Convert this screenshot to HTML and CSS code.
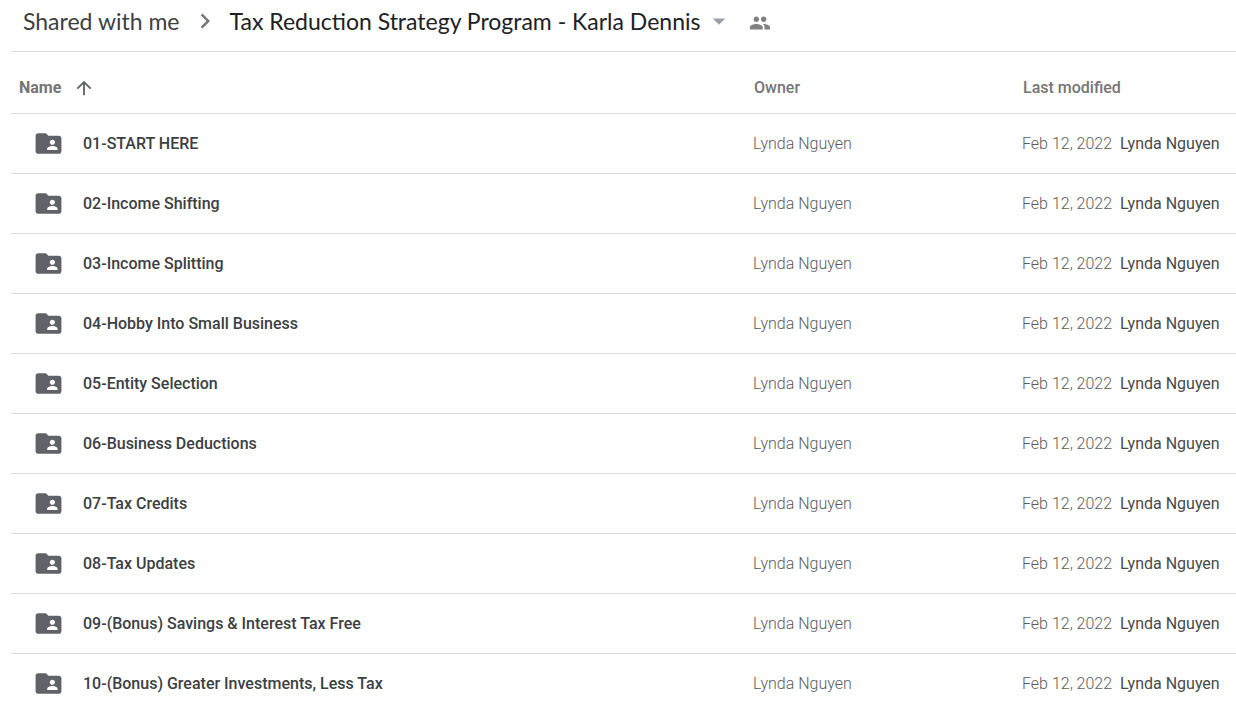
FILE: index.html
```html
<!DOCTYPE html>
<html lang="en">
  <head>
    <meta charset="UTF-8" />
    <meta name="viewport" content="width=device-width, initial-scale=1.0" />
    <title>Tax Reduction Strategy Program - Karla Dennis</title>
    <link rel="stylesheet" href="styles.css">
  </head>
  <body>
    <!-- Icons used more than once -->
    <svg class="sprite" aria-hidden="true">
      <symbol id="folder-shared" viewBox="0 0 24 24">
        <path d="M20 6h-8l-2-2H4c-1.100 0-1.990.9-1.990 2L2 18c0 1.100.9 2 2 2h16c1.100 0 2-.9 2-2V8c0-1.100-.9-2-2-2zm-5 3c1.100 0 2 .9 2 2s-.9 2-2 2-2-.9-2-2 .9-2 2-2zm4 8h-8v-1c0-1.330 2.670-2 4-2s4 .67 4 2v1z" />
      </symbol>
    </svg>

    <header class="breadcrumb">
      <a class="crumb" href="#">Shared with me</a>
      <svg class="chevron" viewBox="0 0 24 24" aria-hidden="true">
        <path d="M10 6L8.590 7.410 13.170 12l-4.580 4.590L10 18l6-6z" />
      </svg>
      <button class="crumb current" type="button">
        Tax Reduction Strategy Program - Karla Dennis
        <svg class="caret" viewBox="0 0 24 24" aria-hidden="true">
          <path d="M7 10l5 5 5-5z" />
        </svg>
      </button>
      <button class="people" type="button" aria-label="Manage people">
        <svg viewBox="0 0 24 24" aria-hidden="true">
          <path d="M16 11c1.660 0 2.990-1.340 2.990-3S17.660 5 16 5s-3 1.340-3 3 1.340 3 3 3zm-8 0c1.660 0 2.990-1.340 2.990-3S9.660 5 8 5 5 6.340 5 8s1.340 3 3 3zm0 2c-2.330 0-7 1.170-7 3.500V19h14v-2.500c0-2.330-4.670-3.500-7-3.500zm8 0c-.29 0-.62.02-.97.050 1.160.84 1.970 1.970 1.970 3.450V19h6v-2.500c0-2.330-4.670-3.500-7-3.500z" />
        </svg>
      </button>
    </header>

    <main>
      <table class="files">
        <thead>
          <tr>
            <th class="col-name" scope="col" aria-sort="ascending">
              <button class="sort" type="button">
                Name
                <svg viewBox="0 0 24 24" aria-hidden="true">
                  <path d="M4 12l1.410 1.410L11 7.830V20h2V7.830l5.580 5.590L20 12l-8-8-8 8z" />
                </svg>
              </button>
            </th>
            <th class="col-owner" scope="col">Owner</th>
            <th class="col-modified" scope="col">Last modified</th>
          </tr>
        </thead>
        <tbody>
          <tr>
            <td><a class="file" href="#"><svg class="folder" aria-hidden="true"><use href="#folder-shared" /></svg>01-START HERE</a></td>
            <td>Lynda Nguyen</td>
            <td>Feb 12, 2022 <span class="by">Lynda Nguyen</span></td>
          </tr>
          <tr>
            <td><a class="file" href="#"><svg class="folder" aria-hidden="true"><use href="#folder-shared" /></svg>02-Income Shifting</a></td>
            <td>Lynda Nguyen</td>
            <td>Feb 12, 2022 <span class="by">Lynda Nguyen</span></td>
          </tr>
          <tr>
            <td><a class="file" href="#"><svg class="folder" aria-hidden="true"><use href="#folder-shared" /></svg>03-Income Splitting</a></td>
            <td>Lynda Nguyen</td>
            <td>Feb 12, 2022 <span class="by">Lynda Nguyen</span></td>
          </tr>
          <tr>
            <td><a class="file" href="#"><svg class="folder" aria-hidden="true"><use href="#folder-shared" /></svg>04-Hobby Into Small Business</a></td>
            <td>Lynda Nguyen</td>
            <td>Feb 12, 2022 <span class="by">Lynda Nguyen</span></td>
          </tr>
          <tr>
            <td><a class="file" href="#"><svg class="folder" aria-hidden="true"><use href="#folder-shared" /></svg>05-Entity Selection</a></td>
            <td>Lynda Nguyen</td>
            <td>Feb 12, 2022 <span class="by">Lynda Nguyen</span></td>
          </tr>
          <tr>
            <td><a class="file" href="#"><svg class="folder" aria-hidden="true"><use href="#folder-shared" /></svg>06-Business Deductions</a></td>
            <td>Lynda Nguyen</td>
            <td>Feb 12, 2022 <span class="by">Lynda Nguyen</span></td>
          </tr>
          <tr>
            <td><a class="file" href="#"><svg class="folder" aria-hidden="true"><use href="#folder-shared" /></svg>07-Tax Credits</a></td>
            <td>Lynda Nguyen</td>
            <td>Feb 12, 2022 <span class="by">Lynda Nguyen</span></td>
          </tr>
          <tr>
            <td><a class="file" href="#"><svg class="folder" aria-hidden="true"><use href="#folder-shared" /></svg>08-Tax Updates</a></td>
            <td>Lynda Nguyen</td>
            <td>Feb 12, 2022 <span class="by">Lynda Nguyen</span></td>
          </tr>
          <tr>
            <td><a class="file" href="#"><svg class="folder" aria-hidden="true"><use href="#folder-shared" /></svg>09-(Bonus) Savings &amp; Interest Tax Free</a></td>
            <td>Lynda Nguyen</td>
            <td>Feb 12, 2022 <span class="by">Lynda Nguyen</span></td>
          </tr>
          <tr>
            <td><a class="file" href="#"><svg class="folder" aria-hidden="true"><use href="#folder-shared" /></svg>10-(Bonus) Greater Investments, Less Tax</a></td>
            <td>Lynda Nguyen</td>
            <td>Feb 12, 2022 <span class="by">Lynda Nguyen</span></td>
          </tr>
        </tbody>
      </table>
    </main>
  </body>
</html>
```

FILE: styles.css
```css
:root {
  --line: #dadce0;
  --text: #3c4043;
  --muted: #757575;
  --icon: #5f6368;
}

* {
  padding: 0;
  margin: 0;
  box-sizing: border-box;
}

body {
  font-family: Roboto, sans-serif;
  font-size: 16px;
  line-height: 20px;
  color: var(--text);
  background: #fff;
  padding-left: 11px;
}

button {
  font: inherit;
  color: inherit;
  background: none;
  border: 0;
  cursor: pointer;
}

a {
  color: inherit;
  text-decoration: none;
}

svg {
  display: block;
  flex-shrink: 0;
  fill: currentColor;
}

.sprite {
  position: absolute;
  width: 0;
  height: 0;
}

/* Breadcrumb */
.breadcrumb {
  display: flex;
  align-items: center;
  height: 52px;
  padding: 0 0 10px 12px;
  border-bottom: 1px solid var(--line);
}

.crumb {
  font-family: Lato, sans-serif;
  font-size: 23px;
  line-height: 28px;
  white-space: nowrap;
}

.current {
  display: flex;
  align-items: center;
  gap: 4px;
  color: #202124;
}

.chevron,
.caret {
  width: 30px;
  height: 30px;
}

.chevron {
  margin: 0 10px;
  color: #777;
}

.caret {
  color: #9aa0a6;
}

.people {
  margin: 4px 0 0 15px;
  color: #808080;
}

.people svg {
  width: 22px;
  height: 22px;
}

/* File list */
.files {
  width: 100%;
  table-layout: fixed;
  border-collapse: collapse;
}

.files th,
.files td {
  height: 60px;
  text-align: left;
  white-space: nowrap;
  border-bottom: 1px solid var(--line);
}

.files th {
  height: 61px;
  padding: 11px 0 0 2px;
  font-weight: 500;
  color: var(--muted);
}

.files td {
  padding: 1px 0 0 1px;
  font-weight: 300;
  color: #5c5c5c;
}

.files tbody tr:last-child td {
  border-bottom: 0;
}

.col-owner {
  width: 269px;
}

.col-modified {
  width: 215px;
}

.sort {
  display: flex;
  align-items: center;
  gap: 12px;
  padding-left: 6px;
  font-weight: 700;
}

.sort svg {
  width: 22px;
  height: 22px;
  color: var(--icon);
}

.file {
  display: flex;
  align-items: center;
  gap: 19px;
  padding-left: 21px;
  font-weight: 500;
  color: var(--text);
}

.folder {
  width: 31px;
  height: 31px;
  color: var(--icon);
}

.by {
  margin-left: 4px;
  font-weight: 400;
  color: #4a4a4a;
}
```
